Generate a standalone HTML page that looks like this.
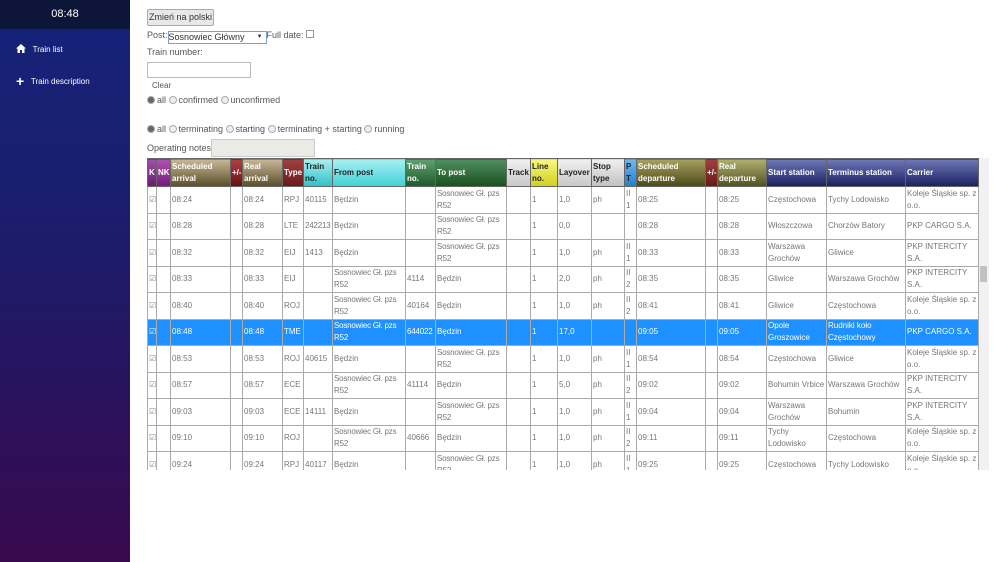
<!DOCTYPE html>
<html><head><meta charset="utf-8"><style>
body{margin:0;width:1000px;height:562px;overflow:hidden;background:#fff;font-family:"Liberation Sans",sans-serif;position:relative}
#side{position:absolute;left:0;top:0;width:130px;height:562px;background:linear-gradient(180deg,#15237a 0%,#1c1c6a 45%,#2e0f58 80%,#3a0a4e 100%)}
#clock{height:29px;background:#0d1638;color:#fff;font-size:11px;text-align:center;line-height:29px}
.nav{position:absolute;left:16px;color:#fff;font-size:8px}
.f{position:absolute;font-size:9px;color:#555}
.rd{display:inline-block;width:6px;height:6px;border-radius:50%;border:1px solid #aaa;background:#eee;vertical-align:-1px;margin-right:2px}
#wrap{position:absolute;left:147px;top:158px;width:832px;height:312px;overflow:hidden}
table{border-collapse:collapse;table-layout:fixed;width:832px;font-size:8px;color:#777}
td,th{border:1px solid #aaa;padding:0 1px;overflow:hidden;line-height:12px}
th{height:27px;color:#fff;text-align:left;font-size:8px;border-color:#666}
td{height:25.5px}
td.s{letter-spacing:-0.2px}
tr.h td{background:#1e90ff;color:#fff}
.cb{font-size:8px;color:#888}
</style></head><body>
<div id="side"><div id="clock">08:48</div>
<div class="nav" style="top:44px"><svg width="10" height="9" viewBox="0 0 10 9" style="vertical-align:-1px"><path d="M5 0L0 4.5h1.5V9h2.5V6h2v3h2.5V4.5H10z" fill="#fff"/></svg>&nbsp;&nbsp;&nbsp;Train list</div>
<div class="nav" style="top:73px"><span style="font-size:14px;font-weight:bold;vertical-align:-2px">+</span>&nbsp;&nbsp;&nbsp;Train description</div>
</div>
<div style="position:absolute;left:147px;top:9px;width:65px;height:15px;border:1px solid #aaa;background:#e8e8e8;font-size:9px;color:#333;text-align:center;line-height:15px;border-radius:2px">Zmień na polski</div>
<div class="f" style="left:147px;top:30px">Post:<span style="display:inline-block;width:97px;height:11px;border:1px solid #7aa0d0;color:#333;line-height:11px;vertical-align:-2px;position:relative">Sosnowiec Główny<span style="position:absolute;right:3px;font-size:6px">▼</span></span>Full date: <span style="display:inline-block;width:6px;height:6px;border:1px solid #999"></span></div>
<div class="f" style="left:147px;top:47px">Train number:</div>
<div style="position:absolute;left:147px;top:62px;width:102px;height:14px;border:1px solid #bbb"></div>
<div class="f" style="left:152px;top:81px;font-size:8px">Clear</div>
<div class="f" style="left:147px;top:95px"><span class="rd" style="background:#666"></span>all <span class="rd"></span>confirmed <span class="rd"></span>unconfirmed</div>
<div class="f" style="left:147px;top:124px"><span class="rd" style="background:#666"></span>all <span class="rd"></span>terminating <span class="rd"></span>starting <span class="rd"></span>terminating + starting <span class="rd"></span>running</div>
<div class="f" style="left:147px;top:143px">Operating notes:</div>
<div style="position:absolute;left:211px;top:139px;width:102px;height:16px;border:1px solid #ccc;background:#ebebe6"></div>
<div style="position:absolute;left:979px;top:158px;width:10px;height:312px;background:#f1f1f1"><div style="position:absolute;left:1px;top:108px;width:7px;height:16px;background:#c1c1c1"></div></div>
<div id="wrap"><table>
<colgroup><col style="width:9px"><col style="width:14px"><col style="width:60px"><col style="width:12px"><col style="width:40px"><col style="width:21px"><col style="width:29px"><col style="width:73px"><col style="width:30px"><col style="width:71px"><col style="width:24px"><col style="width:27px"><col style="width:34px"><col style="width:33px"><col style="width:12px"><col style="width:69px"><col style="width:12px"><col style="width:49px"><col style="width:60px"><col style="width:79px"><col style="width:73px"></colgroup>
<tr>
<th style="background:linear-gradient(#a050a8,#6a1a70)">K</th>
<th style="background:linear-gradient(#b050b0,#7a1a80)">NK</th>
<th style="background:linear-gradient(#c8b898,#5a4e28)">Scheduled arrival</th>
<th style="background:linear-gradient(#b04040,#6a1010)">+/-</th>
<th style="background:linear-gradient(#c8b898,#5a4e28)">Real arrival</th>
<th style="background:linear-gradient(#a04040,#6a1818)">Type</th>
<th style="background:linear-gradient(#a8f0f0,#30c0c8);color:#222">Train no.</th>
<th style="background:linear-gradient(#a8f0f0,#40d0d8);color:#222">From post</th>
<th style="background:linear-gradient(#60a070,#1e5a2a)">Train no.</th>
<th style="background:linear-gradient(#509060,#1a5020)">To post</th>
<th style="background:linear-gradient(#f0f0f0,#c8c8c8);color:#222">Track</th>
<th style="background:linear-gradient(#f8f880,#d0d020);color:#222">Line no.</th>
<th style="background:linear-gradient(#f0f0f0,#c8c8c8);color:#222">Layover</th>
<th style="background:linear-gradient(#f0f0f0,#c0c0c0);color:#222">Stop type</th>
<th style="background:linear-gradient(#70b8f0,#2080d0);color:#222">P T</th>
<th style="background:linear-gradient(#a8a060,#4a4a18)">Scheduled departure</th>
<th style="background:linear-gradient(#a04040,#6a1818)">+/-</th>
<th style="background:linear-gradient(#b0b070,#505020)">Real departure</th>
<th style="background:linear-gradient(#7078b8,#1a2060)">Start station</th>
<th style="background:linear-gradient(#7078b8,#1a2060)">Terminus station</th>
<th style="background:linear-gradient(#7078b8,#1a2060)">Carrier</th></tr>
<tr><td class="cb">☑</td><td></td><td>08:24</td><td></td><td>08:24</td><td>RPJ</td><td>40115</td><td>Będzin</td><td></td><td class="s">Sosnowiec Gł. pzs R52</td><td></td><td>1</td><td>1,0</td><td>ph</td><td>II 1</td><td>08:25</td><td></td><td>08:25</td><td>Częstochowa</td><td>Tychy Lodowisko</td><td>Koleje Śląskie sp. z o.o.</td></tr>
<tr><td class="cb">☑</td><td></td><td>08:28</td><td></td><td>08:28</td><td>LTE</td><td class="s">242213</td><td>Będzin</td><td></td><td class="s">Sosnowiec Gł. pzs R52</td><td></td><td>1</td><td>0,0</td><td></td><td></td><td>08:28</td><td></td><td>08:28</td><td>Włoszczowa</td><td>Chorzów Batory</td><td>PKP CARGO S.A.</td></tr>
<tr><td class="cb">☑</td><td></td><td>08:32</td><td></td><td>08:32</td><td>EIJ</td><td>1413</td><td>Będzin</td><td></td><td class="s">Sosnowiec Gł. pzs R52</td><td></td><td>1</td><td>1,0</td><td>ph</td><td>II 1</td><td>08:33</td><td></td><td>08:33</td><td>Warszawa Grochów</td><td>Gliwice</td><td>PKP INTERCITY S.A.</td></tr>
<tr><td class="cb">☑</td><td></td><td>08:33</td><td></td><td>08:33</td><td>EIJ</td><td></td><td class="s">Sosnowiec Gł. pzs R52</td><td>4114</td><td>Będzin</td><td></td><td>1</td><td>2,0</td><td>ph</td><td>II 2</td><td>08:35</td><td></td><td>08:35</td><td>Gliwice</td><td>Warszawa Grochów</td><td>PKP INTERCITY S.A.</td></tr>
<tr><td class="cb">☑</td><td></td><td>08:40</td><td></td><td>08:40</td><td>ROJ</td><td></td><td class="s">Sosnowiec Gł. pzs R52</td><td>40164</td><td>Będzin</td><td></td><td>1</td><td>1,0</td><td>ph</td><td>II 2</td><td>08:41</td><td></td><td>08:41</td><td>Gliwice</td><td>Częstochowa</td><td>Koleje Śląskie sp. z o.o.</td></tr>
<tr class="h"><td>☑</td><td></td><td>08:48</td><td></td><td>08:48</td><td>TME</td><td></td><td class="s">Sosnowiec Gł. pzs R52</td><td class="s">644022</td><td>Będzin</td><td></td><td>1</td><td>17,0</td><td></td><td></td><td>09:05</td><td></td><td>09:05</td><td>Opole Groszowice</td><td>Rudniki koło Częstochowy</td><td>PKP CARGO S.A.</td></tr>
<tr><td class="cb">☑</td><td></td><td>08:53</td><td></td><td>08:53</td><td>ROJ</td><td>40615</td><td>Będzin</td><td></td><td class="s">Sosnowiec Gł. pzs R52</td><td></td><td>1</td><td>1,0</td><td>ph</td><td>II 1</td><td>08:54</td><td></td><td>08:54</td><td>Częstochowa</td><td>Gliwice</td><td>Koleje Śląskie sp. z o.o.</td></tr>
<tr><td class="cb">☑</td><td></td><td>08:57</td><td></td><td>08:57</td><td>ECE</td><td></td><td class="s">Sosnowiec Gł. pzs R52</td><td>41114</td><td>Będzin</td><td></td><td>1</td><td>5,0</td><td>ph</td><td>II 2</td><td>09:02</td><td></td><td>09:02</td><td>Bohumin Vrbice</td><td>Warszawa Grochów</td><td>PKP INTERCITY S.A.</td></tr>
<tr><td class="cb">☑</td><td></td><td>09:03</td><td></td><td>09:03</td><td>ECE</td><td>14111</td><td>Będzin</td><td></td><td class="s">Sosnowiec Gł. pzs R52</td><td></td><td>1</td><td>1,0</td><td>ph</td><td>II 1</td><td>09:04</td><td></td><td>09:04</td><td>Warszawa Grochów</td><td>Bohumin</td><td>PKP INTERCITY S.A.</td></tr>
<tr><td class="cb">☑</td><td></td><td>09:10</td><td></td><td>09:10</td><td>ROJ</td><td></td><td class="s">Sosnowiec Gł. pzs R52</td><td>40666</td><td>Będzin</td><td></td><td>1</td><td>1,0</td><td>ph</td><td>II 2</td><td>09:11</td><td></td><td>09:11</td><td>Tychy Lodowisko</td><td>Częstochowa</td><td>Koleje Śląskie sp. z o.o.</td></tr>
<tr><td class="cb">☑</td><td></td><td>09:24</td><td></td><td>09:24</td><td>RPJ</td><td>40117</td><td>Będzin</td><td></td><td class="s">Sosnowiec Gł. pzs R52</td><td></td><td>1</td><td>1,0</td><td>ph</td><td>II 1</td><td>09:25</td><td></td><td>09:25</td><td>Częstochowa</td><td>Tychy Lodowisko</td><td>Koleje Śląskie sp. z o.o.</td></tr>
</table></div>
</body></html>
